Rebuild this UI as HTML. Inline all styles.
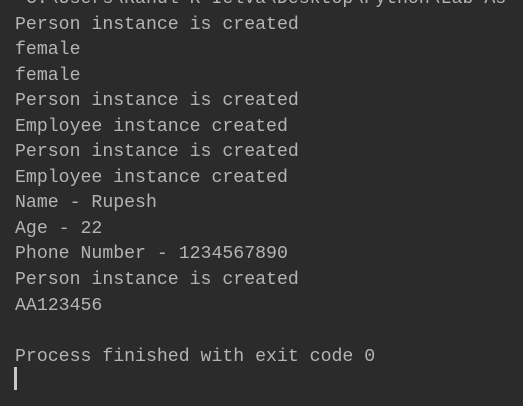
<!DOCTYPE html>
<html><head><style>
html,body{margin:0;padding:0;background:#2b2b2b;width:523px;height:406px;overflow:hidden}
pre{position:absolute;left:15px;top:-13px;width:508px;overflow:hidden;margin:0;font-family:"Liberation Mono",monospace;font-size:18.2px;line-height:25.55px;color:#b4b4b4}
.cur{position:absolute;left:14px;top:367px;width:3px;height:23px;background:#c8c8c8}
</style></head><body>
<pre> C:\Users\Rahul R Ielva\Desktop\Python\Lab As
Person instance is created
female
female
Person instance is created
Employee instance created
Person instance is created
Employee instance created
Name - Rupesh
Age - 22
Phone Number - 1234567890
Person instance is created
AA123456

Process finished with exit code 0</pre>
<div class="cur"></div>
</body></html>
